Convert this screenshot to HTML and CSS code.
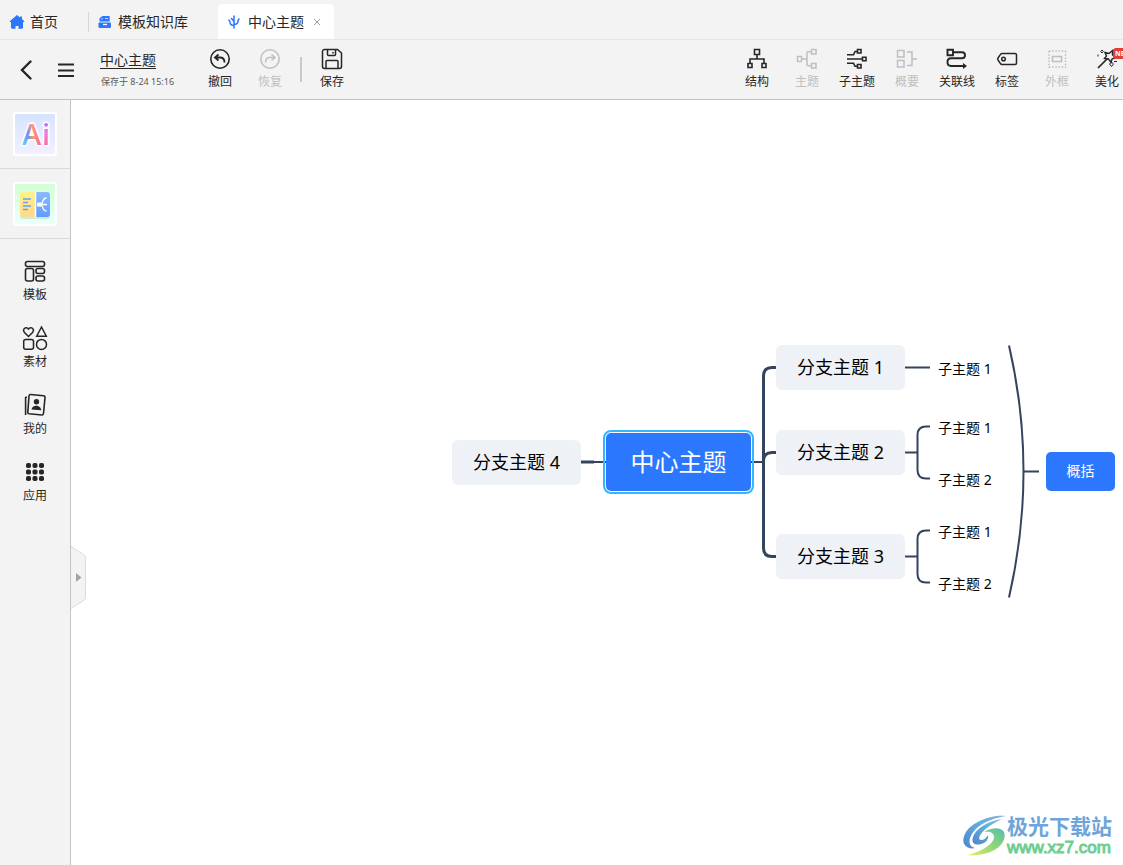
FILE: index.html
```html
<!DOCTYPE html>
<html lang="zh-CN">
<head>
<meta charset="utf-8">
<meta name="viewport" content="width=device-width, initial-scale=1">
<title>中心主题</title>
<link rel="stylesheet" href="styles.css">
</head>
<body>
<div class="app">
  <nav class="tabs">
    <a class="tab tab-home" href="#home">
      <svg width="16" height="16" viewBox="0 0 16 16"><path d="M8 1 1 7c-.4.4-.3 1 .4 1H2v5.500c0 .8.500 1.200 1.200 1.200H6.500V12h3v2.700h3.300c.7 0 1.200-.4 1.200-1.200V8h.6c.7 0 .8-.6.4-1L13 5V2.500h-2v1z" fill="#2b78ff"/></svg>
      <span>首页</span>
    </a>
    <a class="tab tab-library" href="#library">
      <svg width="14" height="14" viewBox="0 0 14 14"><path d="M1.500 6.500V3.200L4.500 1h7.200v5.500z" fill="#2b78ff"/><path d="M3 4h2M7 3.500h3" stroke="#b9d3ff"/><rect x=".5" y="7.500" width="12.500" height="5.500" rx="1" fill="#2b78ff"/><path d="M5 9.500h4" stroke="#fff" stroke-width="1.300"/></svg>
      <span>模板知识库</span>
    </a>
    <a class="tab tab-active" href="#doc">
      <svg width="12" height="16" viewBox="0 0 12 16" fill="none" stroke="#2b78ff" stroke-width="1.500" stroke-linecap="round"><path d="M6 2v12M6 11.500C3 11.500 2 10 2 8M6 10.500c3 0 4-1.500 4-4M1 6l1 2M3.500 4.500 6 7.500M11 5l-1 1.500"/></svg>
      <span>中心主题</span>
    </a>
    <button class="tab-close" aria-label="关闭"><svg width="8" height="8" viewBox="0 0 8 8" stroke="#999" fill="none"><path d="m1 1 6 6M7 1 1 7"/></svg></button>
  </nav>

  <header class="toolbar">
    <button class="icon-btn" aria-label="返回"><svg width="14" height="20" viewBox="0 0 14 20" fill="none" stroke="#262626" stroke-width="2.400" stroke-linecap="round"><path d="M10.500 1.500 2 10l8.500 8.500"/></svg></button>
    <button class="icon-btn menu-btn" aria-label="菜单"><svg width="16" height="14" viewBox="0 0 16 14" stroke="#262626" stroke-width="1.800"><path d="M0 1.500h16M0 7.500h16M0 13h16"/></svg></button>
    <div class="doc">
      <a class="doc-title" href="#rename">中心主题</a>
      <span class="doc-saved">保存于 8-24 15:16</span>
    </div>
    <div class="tools">
      <button class="tool"><svg width="22" height="22" viewBox="0 0 22 22" fill="none" stroke="#262626" stroke-width="1.600"><circle cx="11" cy="11" r="9.200"/><path d="M9.500 6.500 6 9.500l3.500 3M6.500 9.500H11c3 0 4.500 2 4.500 5" stroke-width="1.800"/></svg><span>撤回</span></button>
      <button class="tool" disabled><svg width="22" height="22" viewBox="0 0 22 22" fill="none" stroke="#bfbfbf" stroke-width="1.500"><circle cx="11" cy="11" r="9.200"/><path d="m12.500 6.500 3.500 3-3.500 3M15.500 9.500H11c-3 0-4.500 2-4.500 5"/></svg><span>恢复</span></button>
      <span class="divider"></span>
      <button class="tool"><svg width="22" height="22" viewBox="0 0 22 22" fill="none" stroke="#262626" stroke-width="1.500"><path d="M3.500 1.500h13L20.500 5v13.500a2 2 0 0 1-2 2h-15a2 2 0 0 1-2-2v-15a2 2 0 0 1 2-2z"/><path d="M6.500 1.500v5c0 .8.400 1 1 1h6c.7 0 1-.3 1-1v-5M5 20.500v-7c0-.7.300-1 1-1h10c.7 0 1 .3 1 1v7M12 4v1.500"/></svg><span>保存</span></button>
    </div>
    <div class="tools tools-right">
      <button class="tool"><svg width="22" height="22" viewBox="0 0 22 22" fill="none" stroke="#262626" stroke-width="1.600"><path d="M8.500 1.500h5v5h-5zM2 15.500h4v4H2zM16 15.500h4v4h-4zM11 6.500V11M4 15.500V11h14v4.500"/></svg><span>结构</span></button>
      <button class="tool" disabled><svg width="22" height="22" viewBox="0 0 22 22" fill="none" stroke="#bfbfbf" stroke-width="1.500"><path d="M1.500 8.500h4v5h-4zM15.500 1.500h4.500v4.500h-4.500zM15.500 15.500H20V20h-4.500zM5.500 11H11M15.500 3.700H12c-.7 0-1 .3-1 1v12.100c0 .7.300 1 1 1h3.500"/></svg><span>主题</span></button>
      <button class="tool"><svg width="22" height="22" viewBox="0 0 22 22" fill="none" stroke="#262626" stroke-width="1.600"><path d="M11.500 1.500H15V5h-3.500zM16.500 9.200H20v3.600h-3.500zM11.500 16.500H15V20h-3.500zM1 6.800h6.500L9 3.500h2.500M1 11h15.500M1 15.200h6.500L9 18.300h2.500"/></svg><span>子主题</span></button>
      <button class="tool" disabled><svg width="22" height="22" viewBox="0 0 22 22" fill="none" stroke="#bfbfbf" stroke-width="1.500"><path d="M1.500 2.500H8V9H1.500zM1.500 12.500H8V19H1.500zM11 4h5v13.500h-5M16 11h5"/></svg><span>概要</span></button>
      <button class="tool"><svg width="22" height="22" viewBox="0 0 22 22" fill="none" stroke="#262626" stroke-width="1.900"><path d="M1.500 1.800h5.500v5.500H1.500zM7 4.200h9c4 0 4 6 0 6H5c-4.700 0-4.700 7.800 0 7.800h13"/><path d="m17 15 4 3-4 3z" fill="#262626" stroke="none"/></svg><span>关联线</span></button>
      <button class="tool"><svg width="22" height="22" viewBox="0 0 22 22" fill="none" stroke="#262626" stroke-width="1.500"><path d="M6 5.500h13q1.500 0 1.500 1.500v8q0 1.500-1.500 1.500H6q-1 0-1.700-1.200L2 12q-.7-1 0-2l2.300-3.300Q5 5.500 6 5.500z"/><circle cx="7.500" cy="11" r="1.800"/></svg><span>标签</span></button>
      <button class="tool" disabled><svg width="22" height="22" viewBox="0 0 22 22" fill="none" stroke="#bfbfbf" stroke-width="1.500"><path d="M3 3h17M3 19h17M3 3v17M19.500 3v17" stroke-dasharray="1.500 1.700"/><path d="M6.500 8.500h9v5h-9z"/></svg><span>外框</span></button>
      <button class="tool"><svg width="22" height="22" viewBox="0 0 22 22" fill="none" stroke="#262626" stroke-width="1.700"><path d="m2 20 9.500-9.500"/><path d="m9 4.500 4 1 3.500-3v4.500l3 2.500-3.500 1.500-1 3.500-2.500-3.500-4-.5 2-2.500z" stroke-width="1.400"/><path d="m6 2 1.300 1.500L6 5 4.700 3.500zM2 6.500v2M15.500 14l2 2-2 2.500-2-2.500zM18 13.500h3" stroke-width="1"/></svg><span>美化</span><b class="badge">NEW</b></button>
    </div>
  </header>

  <div class="body">
    <aside class="sidebar">
      <div class="feature">
        <button class="tile tile-ai" aria-label="Ai"><svg width="40" height="40" viewBox="0 0 40 40"><defs><linearGradient id="ga" x1="0" y1="1" x2="1" y2=".8"><stop offset=".05" stop-color="#67ddff"/><stop offset=".38" stop-color="#6f91ee"/><stop offset=".6" stop-color="#ff9978"/><stop offset="1" stop-color="#ff5d9b"/></linearGradient><linearGradient id="gi" x1="0" y1="0" x2="0" y2="1"><stop offset=".25" stop-color="#b96cff"/><stop offset=".5" stop-color="#f07ade"/><stop offset=".85" stop-color="#ff679c"/></linearGradient></defs><text x="7" y="31" class="ai-text" fill="url(#ga)">A</text><text x="27" y="31" class="ai-text" fill="url(#gi)">i</text></svg></button>
      </div>
      <div class="feature">
        <button class="tile tile-map" aria-label="大纲与导图"><svg width="40" height="40" viewBox="0 0 40 40"><defs><linearGradient id="gy" x2="0" y2="1"><stop stop-color="#fff287"/><stop offset="1" stop-color="#ffd98c"/></linearGradient><linearGradient id="gb" x2="0" y2="1"><stop stop-color="#8bbbff"/><stop offset="1" stop-color="#609cff"/></linearGradient></defs><rect x="5" y="10" width="30" height="25" rx="3" fill="#b9dfce" opacity=".6"/><path d="M8 8h12v25H8q-3 0-3-3V11q0-3 3-3z" fill="url(#gy)"/><path d="M21 8h11q3 0 3 3v19q0 3-3 3H21z" fill="url(#gb)"/><path d="M20.500 7.500v26" stroke="#fff" stroke-width="1.500"/><path d="M8 15h8M8 18.500h5M8 22h8M8 25.500h5" stroke="#699fff" stroke-width="1.600"/><path d="M22 20.500h10M31.500 14c-5 0-3 6.500-6 6.500 3 0 1 6.500 6 6.500" fill="none" stroke="#fff" stroke-width="1.300"/><rect x="22" y="18.500" width="5" height="4" rx="1" fill="#fff"/></svg></button>
      </div>
      <div class="side-list">
        <button class="side-item"><svg width="26" height="26" viewBox="0 0 26 26" fill="none" stroke="#262626" stroke-width="1.600"><rect x="3.500" y="3.500" width="19" height="5" rx="2"/><rect x="3.500" y="10.500" width="8" height="12.500" rx="2"/><rect x="14" y="10.500" width="8.500" height="5" rx="2"/><rect x="14" y="18" width="8.500" height="5" rx="2"/></svg><span>模板</span></button>
        <button class="side-item"><svg width="26" height="26" viewBox="0 0 26 26" fill="none" stroke="#262626" stroke-width="1.500"><path d="M6.500 11.500 2.500 7.500C0 4.500 4 .5 6.500 4 9 .5 13 4.500 10.500 7.500zM19.500 2l4.800 9.200h-9.600z"/><rect x="1.700" y="14.500" width="9.800" height="9.800" rx="2"/><circle cx="19.500" cy="19.400" r="5"/></svg><span>素材</span></button>
        <button class="side-item"><svg width="26" height="26" viewBox="0 0 26 26" fill="none" stroke="#262626" stroke-width="1.600"><path d="M8.500 2.500 21.500 3.700q1.700.2 1.500 1.800L21.500 21.500q-.2 1.600-1.700 1.500L7.200 21.800q-1.600-.2-1.400-1.700L7 4Q7.200 2.400 8.500 2.500zM5 5 3.600 5.500V23"/><circle cx="14.500" cy="9.800" r="2.700" fill="#262626" stroke="none"/><path d="M9.500 17.500c.5-5.500 9.500-5 9.800.8z" fill="#262626" stroke="none"/></svg><span>我的</span></button>
        <button class="side-item"><svg width="26" height="26" viewBox="0 0 26 26" fill="#262626"><g id="dots"><rect x="4" y="4" width="5" height="5" rx="1.800"/><rect x="10.500" y="4" width="5" height="5" rx="1.800"/><rect x="17" y="4" width="5" height="5" rx="1.800"/></g><use href="#dots" y="6.500"/><use href="#dots" y="13"/></svg><span>应用</span></button>
      </div>
    </aside>

    <main class="canvas">
      <svg class="links" width="1052" height="765" viewBox="71 100 1052 765" fill="none" stroke="#33445c">
        <path d="M581 462h13" stroke-width="3"/>
        <path d="M594 462h12M751 462h13" stroke-width="2"/>
        <path d="M776 367.500h-4q-8.500 0-8.500 8.500v172q0 8.500 8.500 8.500h4M763.500 461q0-8.500 8.500-8.500h4" stroke-width="3"/>
        <path d="M905 367.500h25" stroke-width="2"/>
        <path d="M905 452.500h12M930 426.500h-4q-8.500 0-8.500 8.500v35q0 8.500 8.500 8.500h4M905 556.500h12M930 530.500h-4q-8.500 0-8.500 8.500v35q0 8.500 8.500 8.500h4" stroke-width="2"/>
        <path d="M1009 345.500Q1038 471 1009 597.500M1024 471.500h15" stroke-width="2"/>
      </svg>
      <div class="node root">中心主题</div>
      <div class="node branch b4">分支主题 4</div>
      <div class="node branch b1">分支主题 1</div>
      <div class="node branch b2">分支主题 2</div>
      <div class="node branch b3">分支主题 3</div>
      <div class="node leaf l11">子主题 1</div>
      <div class="node leaf l21">子主题 1</div>
      <div class="node leaf l22">子主题 2</div>
      <div class="node leaf l31">子主题 1</div>
      <div class="node leaf l32">子主题 2</div>
      <div class="node summary">概括</div>

      <button class="collapse" aria-label="展开侧栏"><svg width="16" height="80" viewBox="0 0 16 80"><path d="M0 8.500 12 16q2.500 1.500 2.500 4v39q0 2.500-2.500 4L0 70.500" fill="#f3f3f3" stroke="#dcdcdc"/><path d="m5 35 5.500 4.500L5 44z" fill="#a3a3a3"/></svg></button>

      <div class="watermark">
        <svg width="44" height="42" viewBox="0 0 44 42"><defs><linearGradient id="wb" x1="0" y1="1" x2="1" y2="0"><stop stop-color="#4d86cb"/><stop offset=".6" stop-color="#63b0de"/><stop offset="1" stop-color="#8bb0dc"/></linearGradient><linearGradient id="wg" x1="0" y1="1" x2="1" y2="0"><stop stop-color="#e6ee62"/><stop offset=".5" stop-color="#91d77a"/><stop offset="1" stop-color="#57bea6"/></linearGradient></defs><path d="M43 1C29-1 9 7 3 17c-7 12 1 18 9 16-9-2-6-13 2-20C22 6 32 3 43 1z" fill="url(#wb)"/><path d="M39 4C25 6 13 13 10 22c-2 6 2 9 8 7 5-1 8-5 7-9-2 3-4 5-7 5-5-1 1-12 21-21z" fill="url(#wb)"/><path d="M21 17c8-5 17-5 20 0 4 11-11 25-37 23 14-3 27-11 27-18 0-4-4-6-10-5z" fill="url(#wg)"/></svg>
        <div class="wm-text"><span class="wm-name">极光下载站</span><span class="wm-url">www.xz7.com</span></div>
      </div>
    </main>
  </div>
</div>
</body>
</html>
```

FILE: styles.css
```css
* { box-sizing: border-box; }

body {
  margin: 0;
  font-family: "Noto Sans", "Noto Sans CJK SC", sans-serif;
  color: #262626;
  overflow: hidden;
}

a { color: inherit; text-decoration: none; }

button {
  padding: 0;
  border: 0;
  background: none;
  color: inherit;
  font: inherit;
}

svg { display: block; flex: none; }

.app { display: flex; flex-direction: column; height: 100vh; background: #f3f3f3; }

/* Tabs */
.tabs {
  display: flex;
  align-items: flex-end;
  height: 40px;
  border-bottom: 1px solid #e6e6e6;
  font-size: 14px;
  line-height: 20px;
}
.tab { display: flex; align-items: center; height: 35px; white-space: nowrap; }
.tab-home { width: 88px; padding-left: 9px; gap: 5px; }
.tab-library { width: 130px; padding-left: 10px; gap: 6px; position: relative; }
.tab-library::before {
  content: "";
  position: absolute;
  left: 0;
  top: 8px;
  height: 20px;
  border-left: 1px solid #d6d6d6;
}
.tab-active { background: #fff; padding-left: 10px; gap: 8px; border-radius: 4px 0 0 0; }
.tab-close {
  display: grid;
  place-items: center;
  width: 30px;
  height: 35px;
  padding-right: 4px;
  background: #fff;
  border-radius: 0 4px 0 0;
}

/* Toolbar */
.toolbar {
  display: flex;
  align-items: center;
  height: 60px;
  border-bottom: 1px solid #c4c4c4;
}
.icon-btn { padding-left: 20px; }
.menu-btn { padding-left: 24px; }
.doc { display: flex; flex-direction: column; width: 95px; margin-left: 26px; gap: 4px; white-space: nowrap; }
.doc-title { font-size: 14px; line-height: 20px; text-decoration: underline; text-underline-offset: 3px; }
.doc-saved { font-size: 9px; line-height: 16px; color: #595959; padding-left: 1px; }
.tools { display: flex; align-items: center; flex: none; }
.tools-right { margin-left: auto; margin-right: -9px; }
.tool {
  position: relative;
  display: flex;
  flex-direction: column;
  align-items: center;
  width: 50px;
  gap: 3px;
  font-size: 12px;
  line-height: 18px;
  white-space: nowrap;
}
.tool:disabled { color: #bfbfbf; }
.divider { width: 2px; height: 25px; margin: 0 5px; background: #c9c9cd; }
.badge {
  position: absolute;
  left: 31px;
  top: 0;
  width: 22px;
  padding-left: 2px;
  border-radius: 3px;
  background: #e33c3c;
  color: #fff;
  font-size: 7px;
  line-height: 11px;
  text-align: left;
}

/* Sidebar */
.body { display: flex; flex: 1; min-height: 0; }
.sidebar { flex: none; width: 71px; border-right: 1px solid #c4c4c4; }
.feature {
  display: grid;
  place-items: center;
  height: 70px;
  border-bottom: 1px solid #d9d9d9;
}
.feature:first-child { height: 69px; }
.tile { border: 2px solid #fff; border-radius: 3px; }
.tile-ai { background: linear-gradient(#d6e4ff, #f3f0ff); }
.tile-map { background: linear-gradient(#d2ffd6, #edfffb); }
.ai-text {
  font: 600 29px "Open Sans", sans-serif;
  stroke: #fff;
  stroke-width: 3px;
  stroke-linejoin: round;
  paint-order: stroke;
}
.side-list { display: flex; flex-direction: column; gap: 21px; padding-top: 19px; }
.side-item {
  display: flex;
  flex-direction: column;
  align-items: center;
  gap: 2px;
  font-size: 12px;
  line-height: 18px;
}

/* Mind map */
.canvas { position: relative; flex: 1; min-width: 0; overflow: hidden; background: #fff; }
.links { position: absolute; left: 0; top: 0; }
.node {
  position: absolute;
  display: grid;
  place-items: center;
  padding-bottom: 3px;
  white-space: nowrap;
  color: #000;
}
.root {
  left: 535px;
  top: 333px;
  width: 145px;
  height: 58px;
  border-radius: 5px;
  outline: 2px solid #31b8ff;
  outline-offset: 1px;
  background: #2b78ff;
  color: #fff;
  font-size: 24px;
}
.branch { width: 129px; height: 45px; border-radius: 6px; background: #eef1f5; font-size: 18px; }
.b4 { left: 381px; top: 340px; }
.b1 { left: 705px; top: 245px; }
.b2 { left: 705px; top: 330px; }
.b3 { left: 705px; top: 434px; }
.leaf { left: 867px; height: 20px; font-size: 14px; }
.l11 { top: 258px; }
.l21 { top: 317px; }
.l22 { top: 369px; }
.l31 { top: 421px; }
.l32 { top: 473px; }
.summary {
  left: 975px;
  top: 352px;
  width: 69px;
  height: 39px;
  border-radius: 5px;
  background: #2b78ff;
  color: #fff;
  font-size: 14px;
}

.collapse { position: absolute; left: 0; top: 438px; }

.watermark { position: absolute; right: 11px; bottom: 8px; display: flex; align-items: flex-end; }
.wm-text { display: flex; flex-direction: column; white-space: nowrap; }
.wm-name { color: #6ea4da; font-weight: 700; font-size: 21px; line-height: 26px; }
.wm-url {
  color: #6fce91;
  font: 400 17px/18px "Liberation Sans", sans-serif;
  -webkit-text-stroke: 1px #6fce91;
}
```
